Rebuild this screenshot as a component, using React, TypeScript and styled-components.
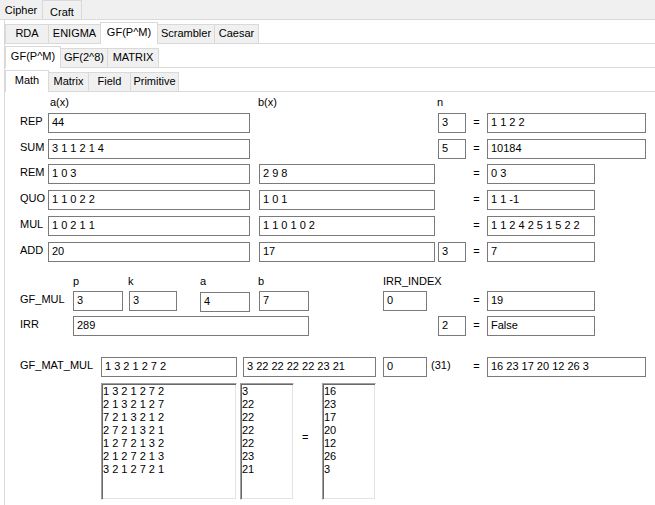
import React from 'react';
import styled, { createGlobalStyle } from 'styled-components';

const GlobalStyle = createGlobalStyle`
  html, body {
    margin: 0;
    padding: 0;
    background: #fff;
  }
  body {
    font-family: "Liberation Sans", Arial, sans-serif;
    font-size: 11px;
    color: #000;
  }
`;

const Window = styled.div`
  width: 655px;
  height: 505px;
  overflow: hidden;
  background: #fff;
`;

const TopStrip = styled.div`
  box-sizing: border-box;
  height: 20px;
  display: flex;
  align-items: flex-end;
  background: #f0f0f0;
  border-bottom: 1px solid #d9d9d9;
`;

const TopTab = styled.div<{ $active?: boolean; $w: number }>`
  box-sizing: border-box;
  width: ${p => p.$w}px;
  height: 19px;
  flex: none;
  text-align: center;
  line-height: 13px;
  padding-top: ${p => (p.$active ? 3 : 5)}px;
  border: 1px solid ${p => (p.$active ? 'transparent' : '#d9d9d9')};
  border-bottom: none;
  background: #f0f0f0;
`;

const Panel = styled.div`
  margin-left: 4px;
  border-left: 1px solid #d9d9d9;
  height: 485px;
`;

const TabStrip = styled.div`
  box-sizing: border-box;
  height: 24px;
  display: flex;
  align-items: flex-end;
  border-bottom: 1px solid #d9d9d9;
`;

const Tab = styled.div<{ $active?: boolean; $w: number }>`
  position: relative;
  z-index: ${p => (p.$active ? 1 : 0)};
  box-sizing: border-box;
  width: ${p => p.$w}px;
  height: ${p => (p.$active ? 22 : 19)}px;
  margin-right: -1px;
  margin-bottom: ${p => (p.$active ? -1 : 0)}px;
  flex: none;
  text-align: center;
  line-height: 13px;
  padding-top: ${p => (p.$active ? 3 : 2)}px;
  white-space: nowrap;
  border: 1px solid #d9d9d9;
  border-bottom: none;
  background: ${p => (p.$active ? '#fff' : '#f0f0f0')};
`;

const Form = styled.div`
  padding-top: 4px;
`;

const CaptionRow = styled.div<{ $mt?: number }>`
  display: flex;
  height: 13px;
  line-height: 13px;
  margin-top: ${p => p.$mt ?? 0}px;
`;

const Caption = styled.div<{ $w?: number; $ml?: number }>`
  flex: none;
  width: ${p => (p.$w ? `${p.$w}px` : 'auto')};
  margin-left: ${p => p.$ml ?? 0}px;
  white-space: nowrap;
`;

const Row = styled.div<{ $mt?: number }>`
  display: flex;
  align-items: flex-start;
  height: 20px;
  margin-top: ${p => p.$mt ?? 0}px;
`;

const Label = styled.div<{ $w: number; $ml?: number }>`
  flex: none;
  width: ${p => p.$w}px;
  margin-left: ${p => p.$ml ?? 0}px;
  padding-top: 2px;
  line-height: 13px;
  white-space: nowrap;
`;

const Box = styled.div<{ $w: number; $ml?: number; $dy?: number }>`
  flex: none;
  box-sizing: border-box;
  width: ${p => p.$w}px;
  height: 20px;
  margin-left: ${p => p.$ml ?? 0}px;
  margin-top: ${p => p.$dy ?? 0}px;
  padding: 2px 0 0 3px;
  border: 1px solid #7a7a7a;
  background: #fff;
  line-height: 13px;
  white-space: pre;
  overflow: hidden;
`;

const Gap = styled.div<{ $w: number }>`
  flex: none;
  width: ${p => p.$w}px;
`;

const Eq = styled.div`
  flex: none;
  width: 21px;
  padding-top: 3px;
  line-height: 13px;
  text-align: center;
`;

const AreaRow = styled.div`
  display: flex;
  align-items: flex-start;
  margin-top: 6px;
`;

const TextArea = styled.div<{ $w: number; $ml?: number }>`
  flex: none;
  box-sizing: border-box;
  width: ${p => p.$w}px;
  height: 117px;
  margin-left: ${p => p.$ml ?? 0}px;
  padding: 1px 0 0 1px;
  border: 1px solid;
  border-color: #a0a0a0 #fff #fff #a0a0a0;
  box-shadow: inset 1px 1px 0 #696969, inset -1px -1px 0 #e3e3e3;
  background: #fff;
  line-height: 13px;
  white-space: pre;
  overflow: hidden;
`;

const AreaEq = styled.div`
  flex: none;
  box-sizing: border-box;
  width: 28px;
  padding: 48px 0 0 8px;
  line-height: 13px;
`;

const matrix = [
  '1 3 2 1 2 7 2',
  '2 1 3 2 1 2 7',
  '7 2 1 3 2 1 2',
  '2 7 2 1 3 2 1',
  '1 2 7 2 1 3 2',
  '2 1 2 7 2 1 3',
  '3 2 1 2 7 2 1',
];
const vec = ['3', '22', '22', '22', '22', '23', '21'];
const res = ['16', '23', '17', '20', '12', '26', '3'];

interface TabDef {
  label: string;
  w: number;
  active?: boolean;
}

const cipherTabs: TabDef[] = [
  { label: 'RDA', w: 44 },
  { label: 'ENIGMA', w: 53 },
  { label: 'GF(P^M)', w: 58, active: true },
  { label: 'Scrambler', w: 58 },
  { label: 'Caesar', w: 45 },
];
const gfTabs: TabDef[] = [
  { label: 'GF(P^M)', w: 56, active: true },
  { label: 'GF(2^8)', w: 48 },
  { label: 'MATRIX', w: 52 },
];
const mathTabs: TabDef[] = [
  { label: 'Math', w: 44, active: true },
  { label: 'Matrix', w: 41 },
  { label: 'Field', w: 43 },
  { label: 'Primitive', w: 49 },
];

function Tabs(props: { tabs: TabDef[] }) {
  return (
    <TabStrip>
      {props.tabs.map(t => (
        <Tab key={t.label} $w={t.w} $active={t.active}>{t.label}</Tab>
      ))}
    </TabStrip>
  );
}

export default function App() {
  return (
    <Window>
      <GlobalStyle />
      <TopStrip>
        <TopTab $w={42} $active>Cipher</TopTab>
        <TopTab $w={40}>Craft</TopTab>
      </TopStrip>
      <Panel>
        <Tabs tabs={cipherTabs} />
        <Tabs tabs={gfTabs} />
        <Tabs tabs={mathTabs} />
        <Form>
          <CaptionRow>
            <Caption $ml={45} $w={208}>a(x)</Caption>
            <Caption $w={179}>b(x)</Caption>
            <Caption>n</Caption>
          </CaptionRow>

          <Row $mt={4}>
            <Label $ml={15} $w={28}>REP</Label>
            <Box $w={202}>44</Box>
            <Gap $w={185} />
            <Box $ml={3} $w={28}>3</Box>
            <Eq>=</Eq>
            <Box $w={159}>1 1 2 2</Box>
          </Row>
          <Row $mt={6}>
            <Label $ml={15} $w={28}>SUM</Label>
            <Box $w={202}>3 1 1 2 1 4</Box>
            <Gap $w={185} />
            <Box $ml={3} $w={28}>5</Box>
            <Eq>=</Eq>
            <Box $w={159}>10184</Box>
          </Row>
          <Row $mt={5}>
            <Label $ml={15} $w={28}>REM</Label>
            <Box $w={202}>1 0 3</Box>
            <Box $ml={9} $w={176}>2 9 8</Box>
            <Gap $w={31} />
            <Eq>=</Eq>
            <Box $w={108}>0 3</Box>
          </Row>
          <Row $mt={6}>
            <Label $ml={15} $w={28}>QUO</Label>
            <Box $w={202}>1 1 0 2 2</Box>
            <Box $ml={9} $w={176}>1 0 1</Box>
            <Gap $w={31} />
            <Eq>=</Eq>
            <Box $w={108}>1 1 -1</Box>
          </Row>
          <Row $mt={6}>
            <Label $ml={15} $w={28}>MUL</Label>
            <Box $w={202}>1 0 2 1 1</Box>
            <Box $ml={9} $w={176}>1 1 0 1 0 2</Box>
            <Gap $w={31} />
            <Eq>=</Eq>
            <Box $w={108}>1 1 2 4 2 5 1 5 2 2</Box>
          </Row>
          <Row $mt={6}>
            <Label $ml={15} $w={28}>ADD</Label>
            <Box $w={202}>20</Box>
            <Box $ml={9} $w={176}>17</Box>
            <Box $ml={3} $w={28}>3</Box>
            <Eq>=</Eq>
            <Box $w={108}>7</Box>
          </Row>

          <CaptionRow $mt={13}>
            <Caption $ml={68} $w={55}>p</Caption>
            <Caption $w={72}>k</Caption>
            <Caption $w={58}>a</Caption>
            <Caption $w={125}>b</Caption>
            <Caption>IRR_INDEX</Caption>
          </CaptionRow>
          <Row $mt={3}>
            <Label $ml={15} $w={53}>GF_MUL</Label>
            <Box $w={50}>3</Box>
            <Box $ml={6} $w={48}>3</Box>
            <Box $ml={23} $w={50} $dy={1}>4</Box>
            <Box $ml={9} $w={50}>7</Box>
            <Box $ml={74} $w={44}>0</Box>
            <Gap $w={39} />
            <Eq>=</Eq>
            <Box $w={108}>19</Box>
          </Row>
          <Row $mt={5}>
            <Label $ml={15} $w={53}>IRR</Label>
            <Box $w={236}>289</Box>
            <Box $ml={129} $w={28}>2</Box>
            <Eq>=</Eq>
            <Box $w={108}>False</Box>
          </Row>

          <Row $mt={21}>
            <Label $ml={15} $w={81}>GF_MAT_MUL</Label>
            <Box $w={136}>1 3 2 1 2 7 2</Box>
            <Box $ml={6} $w={133}>3 22 22 22 22 23 21</Box>
            <Box $ml={7} $w={44}>0</Box>
            <Label $ml={4} $w={35}>(31)</Label>
            <Eq>=</Eq>
            <Box $w={159}>16 23 17 20 12 26 3</Box>
          </Row>
          <AreaRow>
            <TextArea $ml={96} $w={136}>{matrix.join('\n')}</TextArea>
            <TextArea $ml={3} $w={54}>{vec.join('\n')}</TextArea>
            <AreaEq>=</AreaEq>
            <TextArea $w={54}>{res.join('\n')}</TextArea>
          </AreaRow>
        </Form>
      </Panel>
    </Window>
  );
}
